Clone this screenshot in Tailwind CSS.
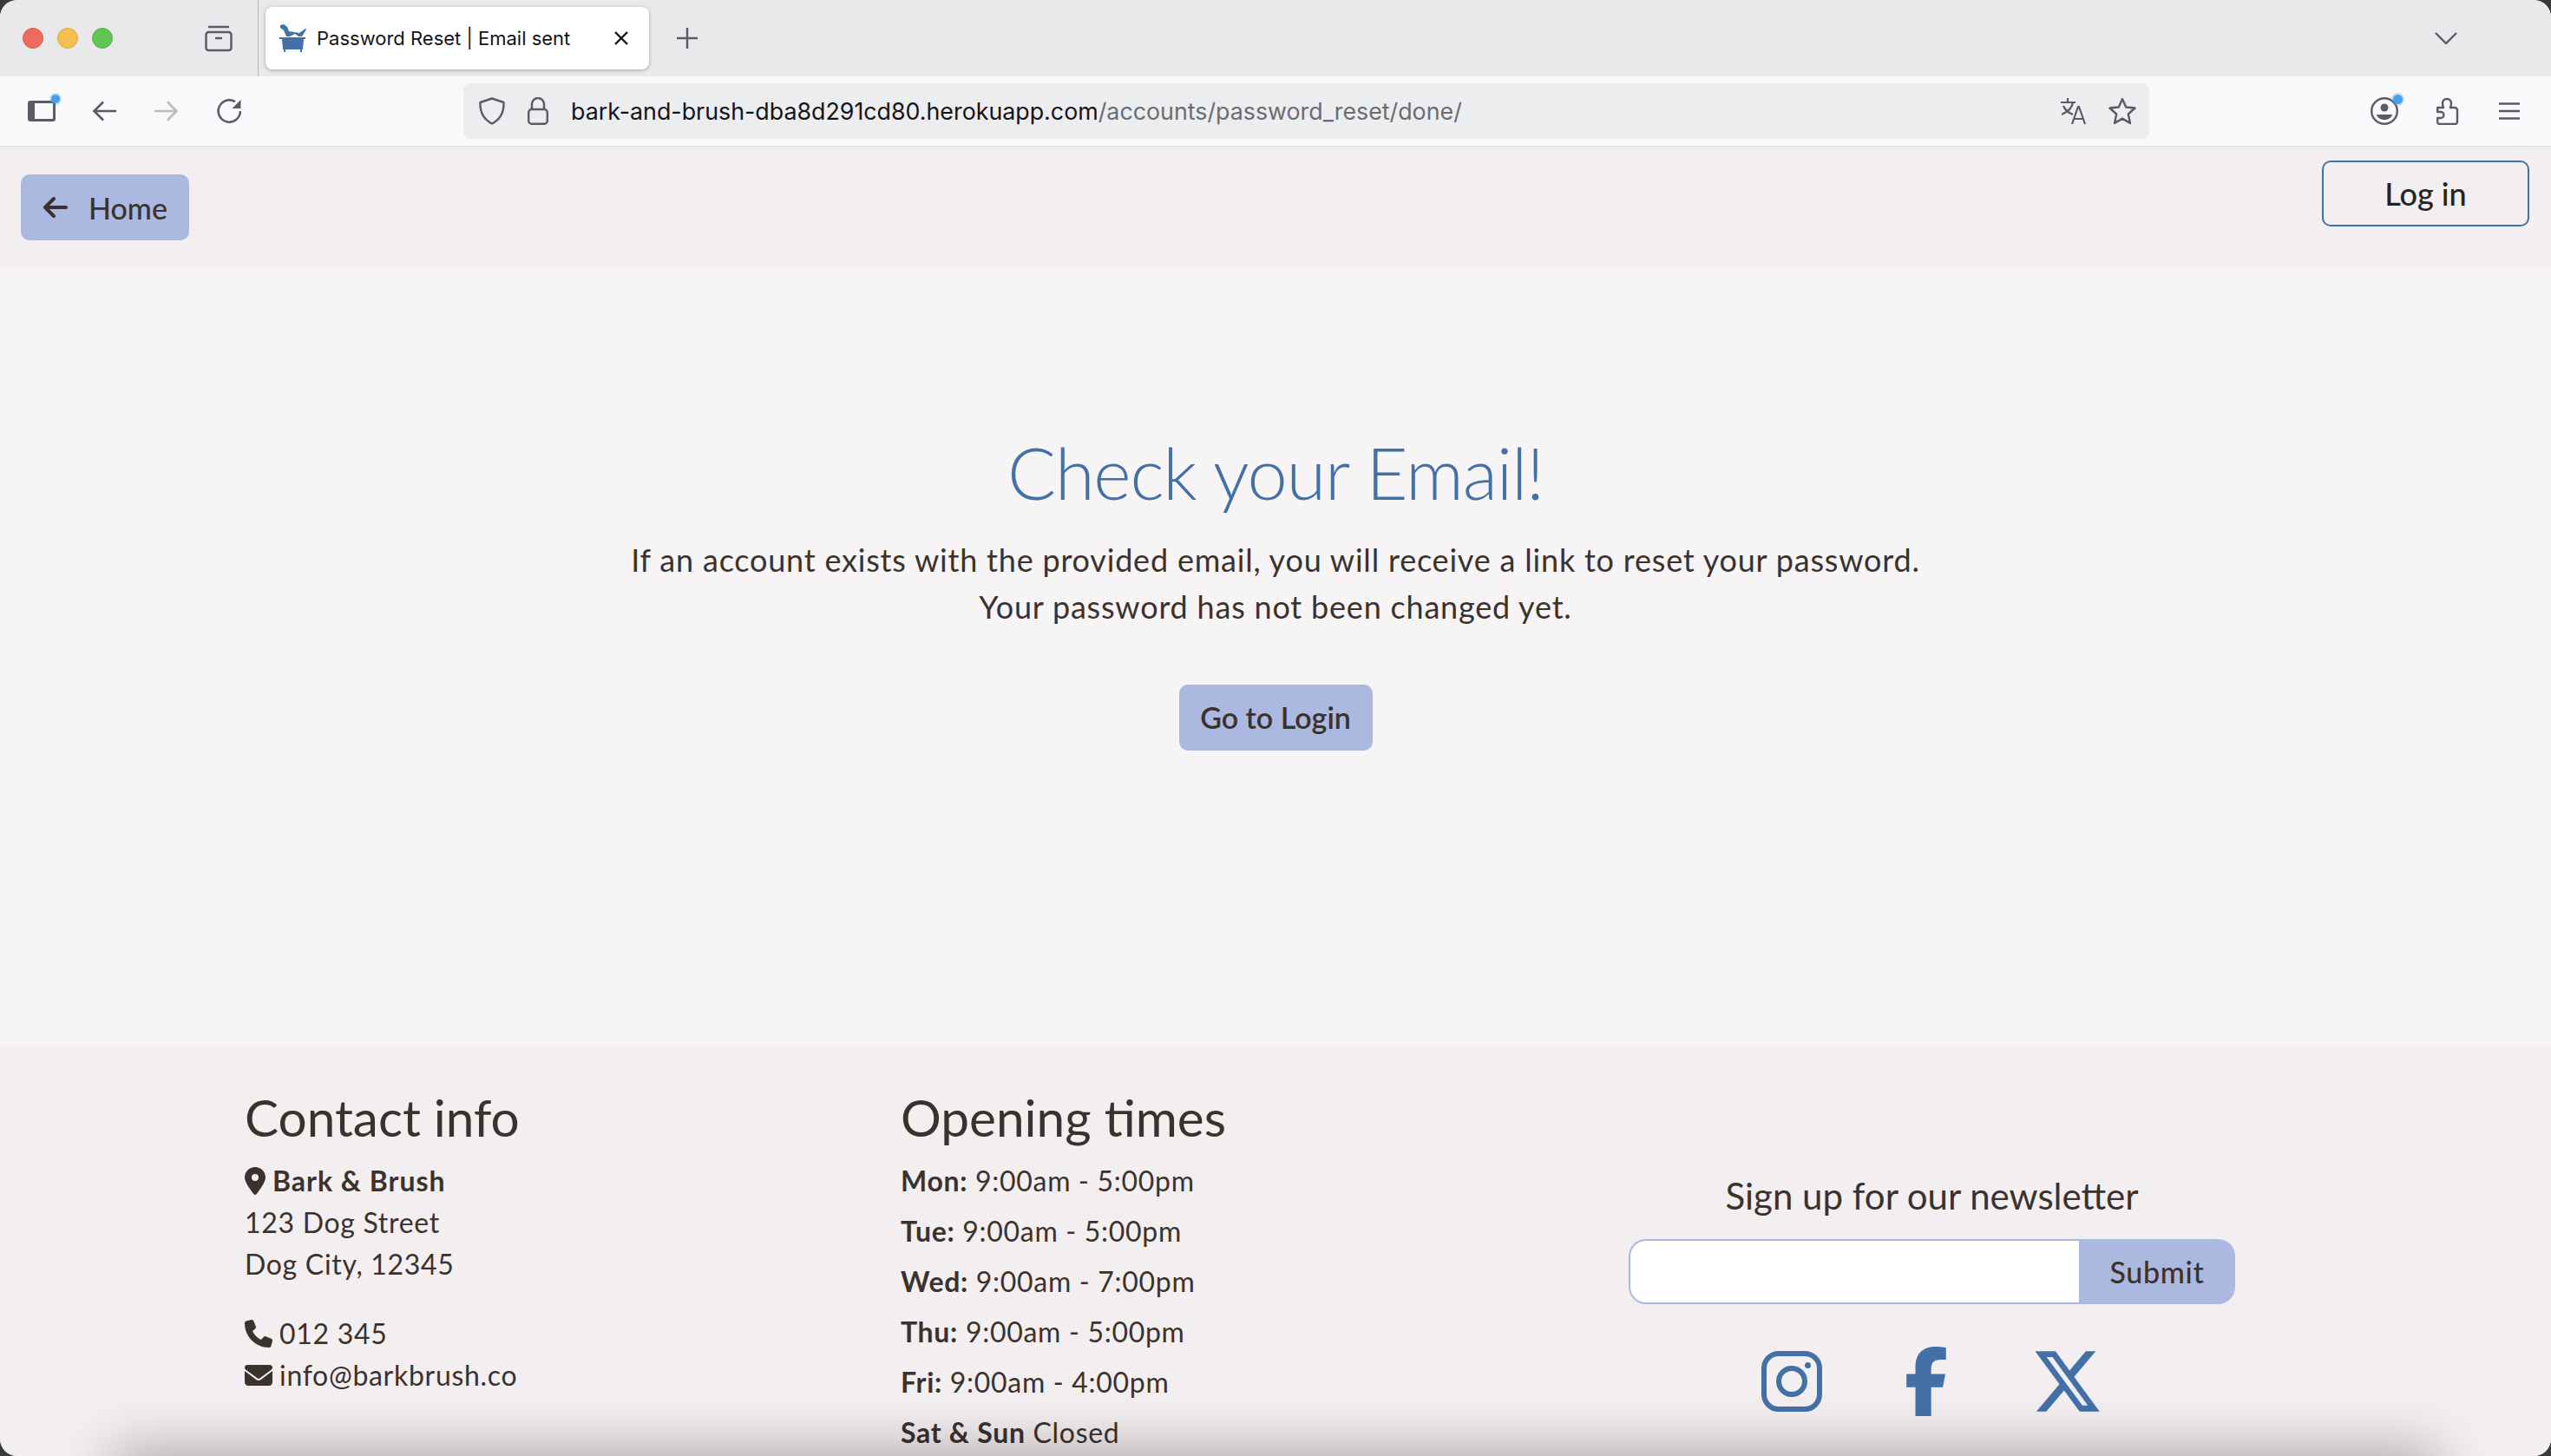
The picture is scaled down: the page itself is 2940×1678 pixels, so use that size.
<!DOCTYPE html>
<html lang="en">
<head>
    <meta charset="UTF-8">
    <meta name="viewport" content="width=device-width, initial-scale=1.0">
    <title>Password Reset | Email sent</title>
    <script src="https://cdn.jsdelivr.net/npm/@tailwindcss/browser@4"></script>
</head>
<body class="bg-[#3a3a3c]">
    <div class="relative h-[1678px] overflow-hidden rounded-[20px] bg-[#f6f4f5] font-['Lato',sans-serif] text-[36px] leading-[54px] text-[#3b322e]">

        <!-- Tab strip -->
        <div class="flex h-[88px] items-center bg-[#e9e9ec] font-['Inter',sans-serif] text-[#5b5b66]">
            <div class="ml-[26px] h-[24px] w-[24px] rounded-full border border-[#dd5a4f] bg-[#ee6a5f]"></div>
            <div class="ml-[16px] h-[24px] w-[24px] rounded-full border border-[#dfa73f] bg-[#f5bf4f]"></div>
            <div class="ml-[16px] h-[24px] w-[24px] rounded-full border border-[#55b24a] bg-[#61c554]"></div>
            <svg class="ml-[106px] h-[32px] w-[32px]" viewBox="0 0 32 32" fill="none" stroke="currentColor" stroke-width="2.5" stroke-linecap="round">
                <path d="M5 3h22"/><rect x="1.5" y="9" width="29" height="21" rx="3"/><path d="M13 16h6"/>
            </svg>
            <div class="ml-[29px] h-[88px] w-[1px] bg-[#b5b5b8]"></div>
            <div class="ml-[8px] flex h-[72px] w-[442px] items-center rounded-[8px] bg-white pl-[16px] shadow-[0_1px_4px_rgba(0,0,0,0.3)]">
                <svg class="h-[32px] w-[32px] text-[#4470a8]" viewBox="0 0 32 32" fill="currentColor">
                    <path d="M1 1L5 0l4 3 2 5 6 1 6 1 7-5 1 1-5 8h-4l-4-3-6 3H8L5 7 1 4z"/>
                    <path d="M0 15h30v2h-2l-1 12H4L3 17H0z"/>
                    <path d="M5 29h2v3H5zM24 29h2v3h-2z"/>
                </svg>
                <span class="ml-[11px] text-[22px] leading-none whitespace-nowrap text-[#15141a]">Password Reset | Email sent</span>
                <svg class="ml-[50px] h-[18px] w-[18px] text-[#15141a]" viewBox="0 0 18 18" fill="none" stroke="currentColor" stroke-width="2.4"><path d="M2 2l14 14M16 2L2 16"/></svg>
            </div>
            <svg class="ml-[32px] h-[24px] w-[24px]" viewBox="0 0 24 24" fill="none" stroke="currentColor" stroke-width="2.4"><path d="M12 0v24M0 12h24"/></svg>
            <svg class="mr-[108px] ml-auto h-[14px] w-[26px]" viewBox="0 0 26 14" fill="none" stroke="currentColor" stroke-width="2.4"><path d="M1 1l12 12L25 1"/></svg>
        </div>

        <!-- Toolbar -->
        <div class="flex h-[81px] items-center border-b border-[#e0dde0] bg-[#f9f9fb] font-['Inter',sans-serif] text-[#5b5b66]">
            <div class="relative ml-[32px] h-[24px] w-[32px]">
                <svg class="h-[24px] w-[32px]" viewBox="0 0 32 24" fill="currentColor"><path fill-rule="evenodd" d="M3 0h26a3 3 0 0 1 3 3v18a3 3 0 0 1-3 3H3a3 3 0 0 1-3-3V3a3 3 0 0 1 3-3zm5 3v18h21V3z"/></svg>
                <div class="absolute -top-[7px] -right-[5px] h-[10px] w-[10px] rounded-full bg-[#45a1f0] shadow-[0_0_0_2px_rgba(69,161,240,0.3)]"></div>
            </div>
            <svg class="ml-[42px] h-[24px] w-[28px]" viewBox="0 0 28 24" fill="none" stroke="currentColor" stroke-width="2.6"><path d="M28 12H3M13 1.5L2.5 12 13 22.5"/></svg>
            <svg class="ml-[44px] h-[24px] w-[28px] text-[#bdbdc1]" viewBox="0 0 28 24" fill="none" stroke="currentColor" stroke-width="2.6"><path d="M0 12h25M15 1.5L25.5 12 15 22.5"/></svg>
            <svg class="ml-[44px] h-[28px] w-[28px]" viewBox="0 0 28 28" fill="currentColor"><path d="M27 14A12.7 12.7 0 1 1 21 3.2" fill="none" stroke="currentColor" stroke-width="2.6"/><path d="M27.5 1v10h-10z"/></svg>
            <div class="ml-[256px] flex h-[64px] w-[1943px] items-center rounded-[8px] bg-[#ecedef]">
                <svg class="ml-[18px] h-[32px] w-[30px]" viewBox="0 0 30 32" fill="none" stroke="currentColor" stroke-width="2.4" stroke-linejoin="round"><path d="M15 1.5L28.5 6c.5 11-3 19-13.500 24.500C4.500 25 1 17 1.500 6z"/></svg>
                <svg class="ml-[26px] h-[32px] w-[24px]" viewBox="0 0 24 32" fill="none" stroke="currentColor" stroke-width="2.400"><rect x="1.200" y="14" width="21.600" height="16.800" rx="3.500"/><path d="M5 14V8a7 7 0 0 1 14 0v6"/></svg>
                <span class="ml-[26px] text-[26.800px] leading-none whitespace-nowrap text-[#15141a]">bark-and-brush-dba8d291cd80.herokuapp.com<span class="text-[#6b6b75]">/accounts/password_reset/done/</span></span>
                <svg class="ml-auto h-[32px] w-[32px]" viewBox="0 0 32 32" fill="none" stroke="currentColor" stroke-width="2.200"><path d="M1 6h17M9 1v5M15 6c-1 6-6 11-13 14M4 10c2 5 6 8 11 10M14 31l7-20h1l7 20M16.500 25h11"/></svg>
                <svg class="mr-[15px] ml-[24px] h-[32px] w-[32px]" viewBox="0 0 32 32" fill="none" stroke="currentColor" stroke-width="2.400" stroke-linejoin="round"><path d="M16 2l4.200 9.500 10.300 1-7.700 7 2.200 10.500L16 24.600 7 30l2.200-10.500-7.700-7 10.300-1z"/></svg>
            </div>
            <div class="relative ml-[255px] h-[32px] w-[32px]">
                <svg class="h-[32px] w-[32px]" viewBox="0 0 32 32" fill="currentColor"><circle cx="16" cy="16" r="14.800" fill="none" stroke="currentColor" stroke-width="2.400"/><circle cx="16" cy="12" r="4.500"/><path d="M7 20h18c-1 4-5 6-9 6s-8-2-9-6z"/></svg>
                <div class="absolute -top-[3px] -right-[5px] h-[11px] w-[11px] rounded-full bg-[#45a1f0] shadow-[0_0_0_2px_rgba(69,161,240,0.3)]"></div>
            </div>
            <svg class="ml-[44px] h-[32px] w-[26px]" viewBox="0 0 26 32" fill="none" stroke="currentColor" stroke-width="2.400" stroke-linejoin="round"><path d="M1.200 12h6.800c-1-2-1-3-1-5a5 5 0 0 1 10 0c0 2 0 3-1 5h5a3 3 0 0 1 3 3v13.500a2.500 2.500 0 0 1-2.500 2.500H3.500A2.300 2.300 0 0 1 1.200 28.500V24H5a3.500 3.500 0 0 0 0-7H1.200z"/></svg>
            <svg class="ml-[46px] h-[20px] w-[24px]" viewBox="0 0 24 20" fill="none" stroke="currentColor" stroke-width="2.400"><path d="M0 1.500h24M0 10h24M0 18.500h24"/></svg>
        </div>

        <!-- Page header -->
        <div class="relative h-[140px] bg-[#f3eef0]">
            <a class="absolute top-[32px] left-[24px] flex h-[76px] w-[194px] items-center gap-[24px] rounded-[10px] bg-[#abb8e0] pl-[26px] text-[34px] font-medium">
                <svg class="h-[32px] w-[28px]" viewBox="0 0 448 512" fill="currentColor"><path d="M9.400 233.400c-12.500 12.500-12.500 32.800 0 45.300l160 160c12.500 12.500 32.800 12.500 45.300 0s12.500-32.800 0-45.300L109.200 288 416 288c17.700 0 32-14.300 32-32s-14.300-32-32-32l-306.700 0L214.600 118.600c12.500-12.500 12.500-32.800 0-45.300s-32.800-12.500-45.300 0l-160 160z"/></svg>
                <span class="pt-[2px]">Home</span>
            </a>
            <a class="absolute top-[16px] right-[25px] flex h-[76px] w-[239px] items-center justify-center rounded-[10px] border-2 border-[#4470a8] font-medium text-[#212529]">Log in</a>
        </div>

        <!-- Main content -->
        <main class="flex h-[896px] flex-col items-center bg-[#f6f4f5] pt-[187px] text-center">
            <h1 class="font-['Lato',sans-serif] text-[83px] leading-[96px] font-light tracking-[-1.200px] text-[#4470a8]">Check your Email!</h1>
            <p class="mt-[26px] tracking-[0.8px]">If an account exists with the provided email, you will receive a link to reset your password.<br>Your password has not been changed yet.</p>
            <a class="mt-[63px] flex h-[76px] w-[223px] items-center justify-center rounded-[10px] bg-[#abb8e0] text-[34px] font-semibold">Go to Login</a>
        </main>

        <!-- Footer -->
        <footer class="flex h-[473px] bg-[#f3eef0] text-[32px] leading-[48px] tracking-[0.7px]">
            <div class="ml-[282px] w-[756px] pt-[46px]">
                <h2 class="text-[58.500px] leading-[72px] tracking-normal">Contact info</h2>
                <div class="mt-[14px] flex items-center gap-[8px] font-bold tracking-[1px]">
                    <svg class="h-[32px] w-[24px]" viewBox="0 0 384 512" fill="currentColor"><path d="M215.700 499.200C267 435 384 279.400 384 192C384 86 298 0 192 0S0 86 0 192c0 87.400 117 243 168.300 307.200c12.300 15.300 35.100 15.300 47.400 0zM192 128a64 64 0 1 1 0 128 64 64 0 1 1 0-128z"/></svg>
                    Bark &amp; Brush
                </div>
                <p>123 Dog Street</p>
                <p>Dog City, 12345</p>
                <div class="mt-[32px] flex items-center gap-[8px]">
                    <svg class="h-[32px] w-[32px]" viewBox="0 0 512 512" fill="currentColor"><path d="M164.900 24.600c-7.700-18.600-28-28.500-47.400-23.200l-88 24C12.100 30.200 0 46 0 64C0 311.400 200.600 512 448 512c18 0 33.800-12.100 38.600-29.500l24-88c5.300-19.400-4.600-39.700-23.200-47.400l-96-40c-16.300-6.800-35.200-2.100-46.300 11.600L304.700 368C234.300 334.700 177.300 277.700 144 207.300L193.300 167c13.700-11.200 18.400-30 11.600-46.300l-40-96z"/></svg>
                    012 345
                </div>
                <div class="flex items-center gap-[8px]">
                    <svg class="h-[32px] w-[32px]" viewBox="0 0 512 512" fill="currentColor"><path d="M48 64C21.500 64 0 85.500 0 112c0 15.100 7.100 29.300 19.200 38.400L236.800 313.600c11.400 8.500 27 8.500 38.400 0L492.800 150.400c12.100-9.100 19.200-23.300 19.200-38.400c0-26.500-21.500-48-48-48H48zM0 176V384c0 35.300 28.700 64 64 64H448c35.300 0 64-28.700 64-64V176L294.400 339.200c-22.800 17.100-54 17.100-76.800 0L0 176z"/></svg>
                    info@barkbrush.co
                </div>
            </div>
            <div class="w-[839px] pt-[46px]">
                <h2 class="text-[58.500px] leading-[72px] tracking-normal">Opening times</h2>
                <ul class="mt-[14px] flex flex-col gap-[10px]">
                    <li><b>Mon:</b> 9:00am - 5:00pm</li>
                    <li><b>Tue:</b> 9:00am - 5:00pm</li>
                    <li><b>Wed:</b> 9:00am - 7:00pm</li>
                    <li><b>Thu:</b> 9:00am - 5:00pm</li>
                    <li><b>Fri:</b> 9:00am - 4:00pm</li>
                    <li><b>Sat &amp; Sun</b> Closed</li>
                </ul>
            </div>
            <div class="w-[699px] pt-[148px] text-center">
                <h3 class="text-[42px] leading-[50px] tracking-normal">Sign up for our newsletter</h3>
                <form class="mt-[25px] flex h-[75px]">
                    <input class="w-[519px] rounded-l-[20px] border-2 border-r-0 border-[#abb8e0] bg-white" type="text">
                    <button class="w-[180px] rounded-r-[20px] bg-[#abb8e0] text-[34px] font-medium" type="button">Submit</button>
                </form>
                <div class="mt-[49px] flex items-center text-[#4470a8]">
                    <svg class="ml-[153px] h-[70px] w-[70px]" viewBox="0 0 70 70" fill="none" stroke="currentColor" stroke-width="6"><rect x="3" y="3" width="64" height="64" rx="17"/><circle cx="35" cy="35" r="15"/><circle cx="53.500" cy="16.500" r="3.500" fill="currentColor" stroke="none"/></svg>
                    <svg class="ml-[95px] h-[80px] w-[50px]" viewBox="0 0 320 512" fill="currentColor"><path d="M80 299.300V512H196V299.300h86.500l18-97.800H196V166.900c0-51.700 20.300-71.500 72.700-71.500c16.300 0 29.400 .4 37 1.200V7.900C291.400 4 256.400 0 236.200 0C129.300 0 80 50.500 80 159.400v42.100H14v97.800H80z"/></svg>
                    <svg class="ml-[100px] h-[70px] w-[75px]" viewBox="24 46 465 420" preserveAspectRatio="none" fill="currentColor"><path d="M389.200 48h70.600L305.600 224.200 487 464H345L233.700 318.600 106.500 464H35.800L200.700 275.500 26.800 48H172.400L272.900 180.900 389.200 48zM364.400 421.800h39.100L151.100 88h-42L364.400 421.800z"/></svg>
                </div>
            </div>
        </footer>

        <!-- Window shadow bleeding in at the bottom edge -->
        <div class="absolute right-[130px] -bottom-[84px] left-[130px] h-[90px] bg-black/30 blur-[32px]"></div>
    </div>
</body>
</html>
